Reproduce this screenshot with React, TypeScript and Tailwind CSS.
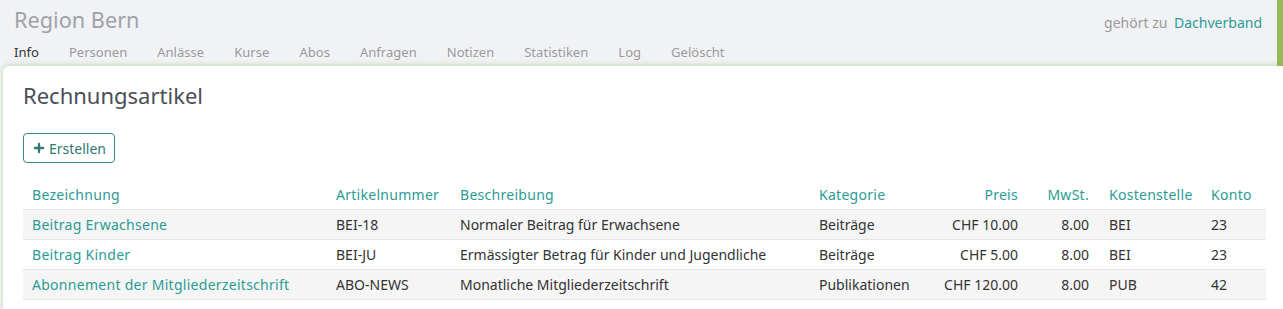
import { Plus } from 'lucide-react';

const tabs = ['Info', 'Personen', 'Anlässe', 'Kurse', 'Abos', 'Anfragen', 'Notizen', 'Statistiken', 'Log', 'Gelöscht'];

const rows = [
  { name: 'Beitrag Erwachsene', nr: 'BEI-18', desc: 'Normaler Beitrag für Erwachsene', cat: 'Beiträge', price: 'CHF 10.00', vat: '8.00', cost: 'BEI', account: '23' },
  { name: 'Beitrag Kinder', nr: 'BEI-JU', desc: 'Ermässigter Betrag für Kinder und Jugendliche', cat: 'Beiträge', price: 'CHF 5.00', vat: '8.00', cost: 'BEI', account: '23' },
  { name: 'Abonnement der Mitgliederzeitschrift', nr: 'ABO-NEWS', desc: 'Monatliche Mitgliederzeitschrift', cat: 'Publikationen', price: 'CHF 120.00', vat: '8.00', cost: 'PUB', account: '42' },
];

export default function App() {
  return (
    <div className="w-[1283px] h-[309px] overflow-hidden bg-[#f1f2f5] font-['Noto_Sans',sans-serif] flex flex-col">
      {/* Header */}
      <div className="flex h-[66px] shrink-0">
        <div className="flex-1 flex flex-col pl-[14px] pr-[15px]">
          <div className="flex items-baseline justify-between pt-[4px]">
            <h1 className="text-[21.7px] leading-[32px] text-[#9ea2a8]">Region Bern</h1>
            <div className="text-[14px] text-[#9a9a9a]">
              gehört zu <span className="ml-[3px] text-[#2b9c94]">Dachverband</span>
            </div>
          </div>
          <nav className="flex gap-[30px] mt-[6px] text-[13px] leading-[20px] tracking-[0.03px]">
            {tabs.map((t, i) => (
              <span key={t} className={i === 0 ? 'text-[#333]' : 'text-[#9a9a9a]'}>{t}</span>
            ))}
          </nav>
        </div>
        <div className="w-[6px] bg-[#92bb55]" />
      </div>

      {/* Card */}
      <div className="flex-1 ml-[3px] bg-white rounded-tl-[6px] shadow-[0_-1px_5px_rgba(140,185,90,0.45)] px-[20px] pt-[15px]">
        <h2 className="text-[22px] leading-[28px] text-[#4a4e57]">Rechnungsartikel</h2>
        <button className="mt-[24px] h-[30px] pl-[8px] pr-[8px] flex items-center gap-[3px] border border-[#3b8a84] rounded-[4px] text-[14px] text-[#2f7a74]">
          <Plus size={14} strokeWidth={4} />
          Erstellen
        </button>
        <table className="mt-[17px] table-fixed w-[1243px] text-[14px] text-[#333] border-collapse">
          <colgroup>
            <col className="w-[304px]" />
            <col className="w-[124px]" />
            <col className="w-[359px]" />
            <col className="w-[109px]" />
            <col className="w-[108px]" />
            <col className="w-[73px]" />
            <col className="w-[102px]" />
            <col className="w-[64px]" />
          </colgroup>
          <thead>
            <tr className="h-[29px] text-[#2b9c94] text-left tracking-[0.28px]">
              <th className="font-normal px-[9px]">Bezeichnung</th>
              <th className="font-normal px-[9px]">Artikelnummer</th>
              <th className="font-normal px-[9px]">Beschreibung</th>
              <th className="font-normal px-[9px]">Kategorie</th>
              <th className="font-normal px-[9px] text-right">Preis</th>
              <th className="font-normal pl-[9px] pr-[11px] text-right">MwSt.</th>
              <th className="font-normal px-[9px]">Kostenstelle</th>
              <th className="font-normal px-[9px]">Konto</th>
            </tr>
          </thead>
          <tbody>
            {rows.map((r, i) => (
              <tr key={r.nr} className={`h-[30px] border-t border-b border-[#e6e6e6] ${i % 2 === 0 ? 'bg-[#f5f5f5]' : 'bg-white'}`}>
                <td className="px-[9px] text-[#2b9c94] tracking-[0.28px] whitespace-nowrap">{r.name}</td>
                <td className="px-[9px]">{r.nr}</td>
                <td className="px-[9px] whitespace-nowrap">{r.desc}</td>
                <td className="px-[9px]">{r.cat}</td>
                <td className="px-[9px] text-right">{r.price}</td>
                <td className="pl-[9px] pr-[11px] text-right">{r.vat}</td>
                <td className="px-[9px]">{r.cost}</td>
                <td className="px-[9px]">{r.account}</td>
              </tr>
            ))}
          </tbody>
        </table>
      </div>
    </div>
  );
}
